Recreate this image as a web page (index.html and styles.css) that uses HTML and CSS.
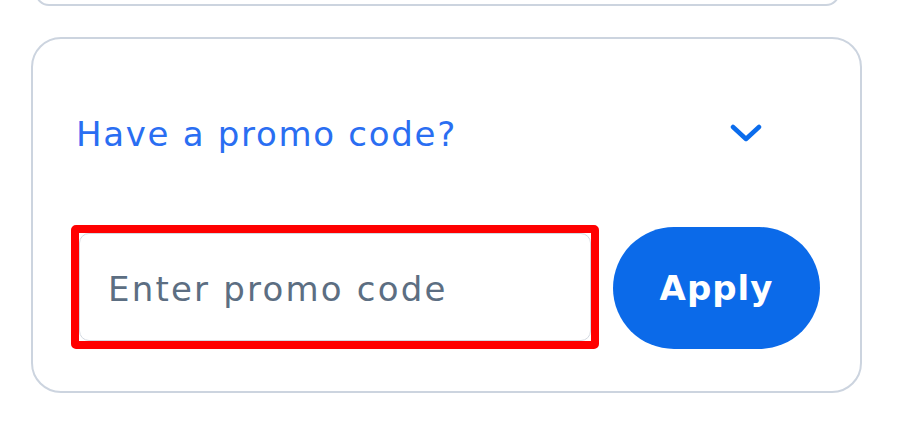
FILE: index.html
```html
<!DOCTYPE html>
<html lang="en">
<head>
  <meta charset="UTF-8" />
  <meta name="viewport" content="width=device-width, initial-scale=1.0" />
  <title>Promo code</title>
  <link rel="stylesheet" href="styles.css">
</head>
<body>

  <div class="page">
    <div class="card card-previous"></div>

    <div class="card promo">
      <div class="promo-header">
        <span class="promo-title">Have a promo code?</span>
        <svg class="promo-chevron" width="32" height="20" viewBox="0 0 32 20" aria-hidden="true">
          <path d="M3 3 L16 15 L29 3" fill="none" stroke="#0b6cec" stroke-width="4.5" stroke-linecap="round" stroke-linejoin="round" />
        </svg>
      </div>

      <div class="promo-form">
        <div class="promo-field">
          <input class="promo-input" type="text" placeholder="Enter promo code" />
        </div>
        <button class="promo-button">Apply</button>
      </div>
    </div>
  </div>

</body>
</html>
```

FILE: styles.css
```css
body {
  margin: 0;
  background: #ffffff;
  font-family: "DejaVu Sans", Verdana, sans-serif;
  overflow: hidden;
}

.page {
  display: flex;
  flex-direction: column;
  gap: 31px;
  padding: 0 38px 0 31px;
  margin-top: -60px;
}

.card {
  border: 2px solid #ccd4df;
  border-radius: 30px;
  background: #ffffff;
  box-sizing: border-box;
}

.card-previous {
  height: 66px;
  margin: 0 22px 0 4px;
  border-radius: 0 0 14px 14px;
}

.promo {
  height: 356px;
  display: flex;
  flex-direction: column;
}

.promo-header {
  display: flex;
  align-items: center;
  justify-content: space-between;
  height: 40px;
  padding: 75px 98px 0 43px;
}

.promo-title {
  color: #2a6ef2;
  font-size: 34px;
  line-height: 40px;
  letter-spacing: 1.7px;
}

.promo-chevron {
  display: block;
}

.promo-form {
  display: flex;
  align-items: center;
  gap: 14px;
  margin-top: 70px;
  padding: 0 40px 0 38px;
}

.promo-field {
  width: 528px;
  height: 124px;
  border: 8px solid #ff0000;
  border-radius: 5px;
  box-sizing: border-box;
  display: flex;
}

.promo-input {
  flex: 1;
  margin: 0;
  border: 1px solid #d3d9e1;
  border-radius: 10px;
  padding: 4px 0 0 28px;
  font-family: "DejaVu Sans", Verdana, sans-serif;
  font-size: 34px;
  letter-spacing: 2.2px;
  color: #33475b;
  outline: none;
}

.promo-input::placeholder {
  color: #5c6e82;
}

.promo-button {
  width: 207px;
  height: 122px;
  border: none;
  border-radius: 61px;
  background: #0b6ae9;
  color: #ffffff;
  font-family: "DejaVu Sans", Verdana, sans-serif;
  font-weight: bold;
  font-size: 34px;
  letter-spacing: 1px;
  margin-top: 3px;
  cursor: pointer;
}
```
